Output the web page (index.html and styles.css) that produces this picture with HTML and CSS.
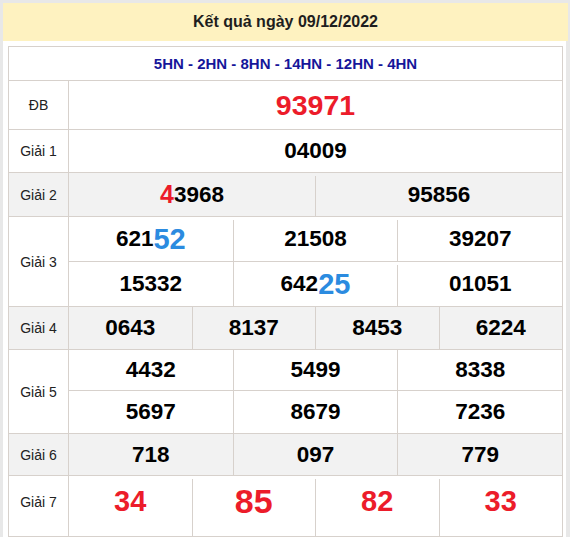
FILE: index.html
```html
<!DOCTYPE html>
<html lang="vi">
<head>
<meta charset="utf-8">
<title>Kết quả ngày 09/12/2022</title>
<link rel="stylesheet" href="styles.css">
</head>
<body>
<div class="wrap">
  <div class="title">Kết quả ngày 09/12/2022</div>
  <div class="content">
    <div class="table">
      <div class="row r-head">5HN - 2HN - 8HN - 14HN - 12HN - 4HN</div>

      <div class="row r-db">
        <div class="label">ĐB</div>
        <div class="vals"><div class="line"><div class="cell db">93971</div></div></div>
      </div>

      <div class="row r-g1">
        <div class="label">Giải 1</div>
        <div class="vals"><div class="line"><div class="cell">04009</div></div></div>
      </div>

      <div class="row r-g2 alt">
        <div class="label">Giải 2</div>
        <div class="vals"><div class="line">
          <div class="cell"><span class="red-25">4</span>3968</div>
          <div class="cell gap">95856</div>
        </div></div>
      </div>

      <div class="row r-g3">
        <div class="label">Giải 3</div>
        <div class="vals">
          <div class="line">
            <div class="cell">621<span class="blue">52</span></div>
            <div class="cell gap">21508</div>
            <div class="cell gap">39207</div>
          </div>
          <div class="line">
            <div class="cell">15332</div>
            <div class="cell">642<span class="blue">25</span></div>
            <div class="cell gap">01051</div>
          </div>
        </div>
      </div>

      <div class="row r-g4 alt">
        <div class="label">Giải 4</div>
        <div class="vals"><div class="line">
          <div class="cell">0643</div>
          <div class="cell">8137</div>
          <div class="cell">8453</div>
          <div class="cell">6224</div>
        </div></div>
      </div>

      <div class="row r-g5">
        <div class="label">Giải 5</div>
        <div class="vals">
          <div class="line l-40">
            <div class="cell">4432</div>
            <div class="cell">5499</div>
            <div class="cell">8338</div>
          </div>
          <div class="line l-43">
            <div class="cell">5697</div>
            <div class="cell">8679</div>
            <div class="cell">7236</div>
          </div>
        </div>
      </div>

      <div class="row r-g6 alt">
        <div class="label">Giải 6</div>
        <div class="vals"><div class="line">
          <div class="cell">718</div>
          <div class="cell">097</div>
          <div class="cell">779</div>
        </div></div>
      </div>

      <div class="row r-g7">
        <div class="label">Giải 7</div>
        <div class="vals"><div class="line">
          <div class="cell g7">34</div>
          <div class="cell gap g7 big">85</div>
          <div class="cell gap g7">82</div>
          <div class="cell gap g7">33</div>
        </div></div>
      </div>
    </div>
  </div>
</div>
</body>
</html>
```

FILE: styles.css
```css
* {
  box-sizing: border-box;
  margin: 0;
  padding: 0;
}

html,
body {
  background: #e8e8e8;
}

body {
  padding: 3px 2px 0 3px;
  font-family: "Liberation Sans", Arial, sans-serif;
}

.wrap {
  width: 565px;
}

.title {
  height: 38px;
  background: #fef2c0;
  display: flex;
  align-items: center;
  justify-content: center;
  font-weight: bold;
  font-size: 16px;
  color: #1e1e1e;
}

.content {
  width: 563px;
  background: #fff;
  padding: 5px 0 0 5px;
}

.table {
  width: 555px;
  border: 1px solid #d7d1cc;
}

.row {
  display: flex;
  border-top: 1px solid #d7d1cc;
}

.alt {
  background: #f2f2f2;
}

.r-head {
  border-top: 0;
  height: 33px;
  align-items: center;
  justify-content: center;
  font-weight: bold;
  font-size: 15px;
  color: #16169a;
}

.r-db { height: 49px; }
.r-g1 { height: 43px; }
.r-g2 { height: 44px; }
.r-g3 { height: 90px; }
.r-g4 { height: 43px; }
.r-g5 { height: 84px; }
.r-g6 { height: 42px; }
.r-g7 { height: 61px; }

.label {
  flex: none;
  width: 60px;
  border-right: 1px solid #d7d1cc;
  display: flex;
  align-items: center;
  justify-content: center;
  font-size: 14px;
  color: #222;
}

.r-g7 .label {
  padding-bottom: 9px;
}

.vals {
  flex: 1;
  display: flex;
  flex-direction: column;
}

.line {
  flex: 1 1 0;
  display: flex;
}

.line + .line {
  border-top: 1px solid #d7d1cc;
}

.l-40 {
  flex: none;
  height: 40px;
}

.l-43 {
  flex: none;
  height: 43px;
}

.cell {
  flex: 1 1 0;
  display: flex;
  align-items: center;
  justify-content: center;
  font-weight: bold;
  font-size: 22.5px;
  color: #000;
  white-space: nowrap;
}

.cell + .cell {
  border-left: 1px solid #d7d1cc;
}

.cell.gap {
  border-image: linear-gradient(to bottom, transparent 4px, #d7d1cc 4px) 1;
}

.cell .red-25 {
  color: #ec1c2a;
  font-size: 25px;
}

.cell .blue {
  color: #2b8be0;
  font-size: 29px;
}

.db {
  color: #ec1c2a;
  font-size: 28.5px;
}

.g7 {
  color: #ec1c2a;
  font-size: 29px;
  padding-bottom: 9px;
}

.g7.big {
  font-size: 34px;
}
```
